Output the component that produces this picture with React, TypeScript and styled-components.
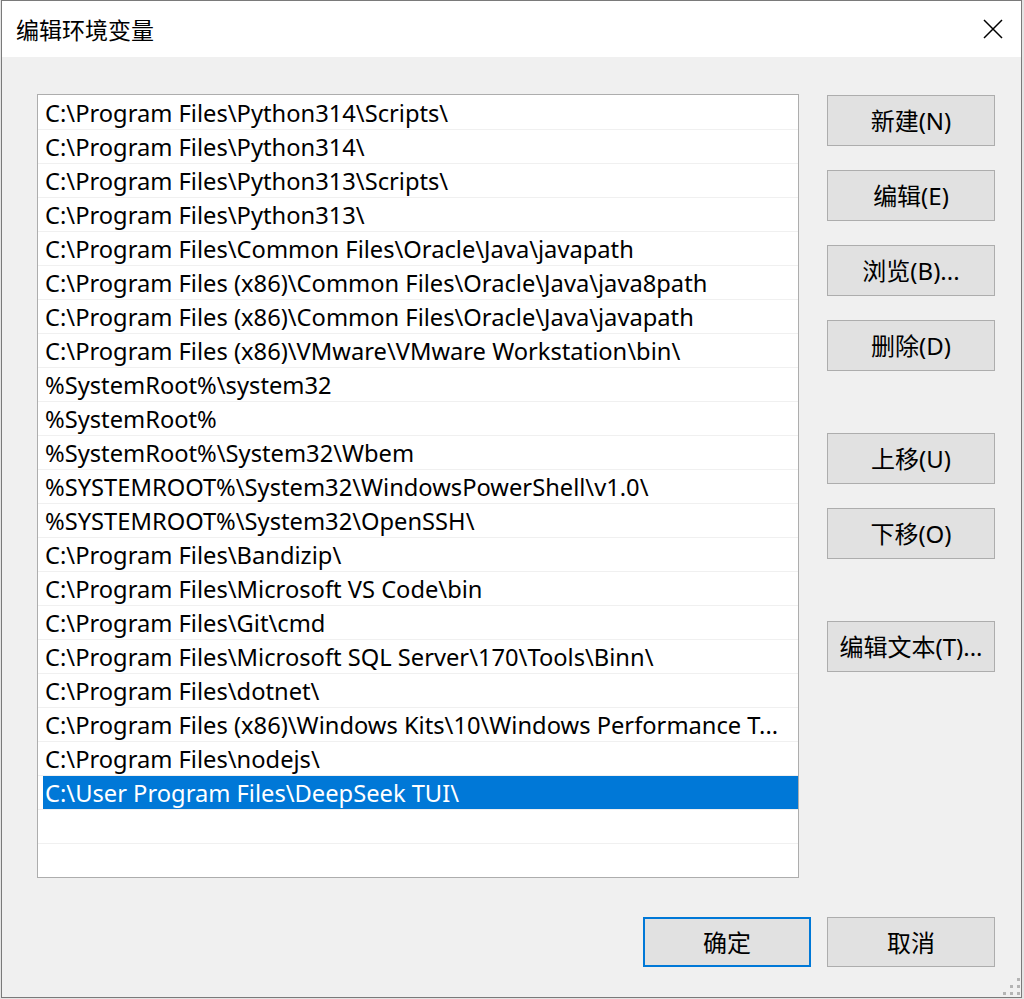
import styled, { createGlobalStyle } from "styled-components";

const paths = [
  "C:\\Program Files\\Python314\\Scripts\\",
  "C:\\Program Files\\Python314\\",
  "C:\\Program Files\\Python313\\Scripts\\",
  "C:\\Program Files\\Python313\\",
  "C:\\Program Files\\Common Files\\Oracle\\Java\\javapath",
  "C:\\Program Files (x86)\\Common Files\\Oracle\\Java\\java8path",
  "C:\\Program Files (x86)\\Common Files\\Oracle\\Java\\javapath",
  "C:\\Program Files (x86)\\VMware\\VMware Workstation\\bin\\",
  "%SystemRoot%\\system32",
  "%SystemRoot%",
  "%SystemRoot%\\System32\\Wbem",
  "%SYSTEMROOT%\\System32\\WindowsPowerShell\\v1.0\\",
  "%SYSTEMROOT%\\System32\\OpenSSH\\",
  "C:\\Program Files\\Bandizip\\",
  "C:\\Program Files\\Microsoft VS Code\\bin",
  "C:\\Program Files\\Git\\cmd",
  "C:\\Program Files\\Microsoft SQL Server\\170\\Tools\\Binn\\",
  "C:\\Program Files\\dotnet\\",
  "C:\\Program Files (x86)\\Windows Kits\\10\\Windows Performance T...",
  "C:\\Program Files\\nodejs\\",
  "C:\\User Program Files\\DeepSeek TUI\\",
  "",
  "",
];

const selectedIndex = 20;

const sideButtons = [
  { label: "新建(N)", spaced: false },
  { label: "编辑(E)", spaced: false },
  { label: "浏览(B)...", spaced: false },
  { label: "删除(D)", spaced: false },
  { label: "上移(U)", spaced: true },
  { label: "下移(O)", spaced: false },
  { label: "编辑文本(T)...", spaced: true },
];

// resize grip dots: [column, row]
const gripDots = [
  [3, 1],
  [2, 2],
  [3, 2],
  [1, 3],
  [2, 3],
  [3, 3],
];

export default function App() {
  return (
    <>
      <GlobalStyle />
      <Window>
        <TitleBar>
          <Title>编辑环境变量</Title>
          <CloseButton aria-label="关闭">
            <svg width="20" height="20" viewBox="0 0 20 20">
              <path d="M1 1 L19 19 M19 1 L1 19" stroke="#000" strokeWidth="1.5" fill="none" />
            </svg>
          </CloseButton>
        </TitleBar>
        <Body>
          <Main>
            <PathList>
              {paths.map((p, i) => (
                <PathRow key={i}>
                  <PathCell $selected={i === selectedIndex}>{p}</PathCell>
                </PathRow>
              ))}
            </PathList>
            <SideColumn>
              {sideButtons.map((b) => (
                <SideButton key={b.label} $spaced={b.spaced}>
                  {b.label}
                </SideButton>
              ))}
            </SideColumn>
          </Main>
          <Footer>
            <DialogButton $primary>确定</DialogButton>
            <DialogButton>取消</DialogButton>
          </Footer>
        </Body>
        <Grip>
          {gripDots.map(([c, r]) => (
            <GripDot key={`${c}-${r}`} $col={c} $row={r} />
          ))}
        </Grip>
      </Window>
    </>
  );
}

const GlobalStyle = createGlobalStyle`
  html, body {
    margin: 0;
    padding: 0;
    background: #e4e4e4;
  }
  body {
    width: 1024px;
    height: 999px;
    overflow: hidden;
    font-family: "Noto Sans", "Noto Sans CJK SC", sans-serif;
  }
  * {
    box-sizing: border-box;
  }
`;

const Window = styled.div`
  position: relative;
  width: 1021px;
  height: 998px;
  margin-left: 1px;
  border: 1px solid #7a7a7a;
  background: #f0f0f0;
  display: flex;
  flex-direction: column;
`;

const TitleBar = styled.div`
  height: 56px;
  flex-shrink: 0;
  background: #fff;
  display: flex;
  align-items: center;
  justify-content: space-between;
  padding: 0 18px 0 14px;
`;

const Title = styled.div`
  font-size: 23px;
  color: #000;
  font-family: "Noto Sans CJK SC", sans-serif;
`;

const CloseButton = styled.div`
  width: 20px;
  height: 20px;
  display: flex;
  svg {
    display: block;
  }
`;

const Body = styled.div`
  flex: 1;
  display: flex;
  flex-direction: column;
  padding: 37px 26px 30px 35px;
`;

const Main = styled.div`
  display: flex;
  gap: 28px;
`;

const PathList = styled.div`
  width: 762px;
  height: 784px;
  border: 1px solid #adadad;
  background: #fff;
  padding-top: 1px;
  overflow: hidden;
`;

const PathRow = styled.div`
  height: 34px;
  border-bottom: 1px solid #f0f0f0;
  padding-left: 5px;
  display: flex;
`;

const PathCell = styled.div<{ $selected?: boolean }>`
  flex: 1;
  padding-left: 2px;
  display: flex;
  align-items: center;
  font-size: 23.7px;
  white-space: nowrap;
  overflow: hidden;
  color: ${(p) => (p.$selected ? "#fff" : "#000")};
  background: ${(p) => (p.$selected ? "#0078d7" : "transparent")};
`;

const SideColumn = styled.div`
  width: 168px;
  display: flex;
  flex-direction: column;
  padding-top: 1px;
`;

const SideButton = styled.div<{ $spaced?: boolean }>`
  height: 51px;
  margin-bottom: 24px;
  margin-top: ${(p) => (p.$spaced ? "38px" : "0")};
  background: #e1e1e1;
  border: 1px solid #adadad;
  display: flex;
  align-items: center;
  justify-content: center;
  padding-bottom: 3px;
  font-size: 24px;
  color: #000;
`;

const Footer = styled.div`
  margin-top: 39px;
  display: flex;
  justify-content: flex-end;
  gap: 16px;
`;

const DialogButton = styled.div<{ $primary?: boolean }>`
  width: 168px;
  height: 50px;
  background: #e1e1e1;
  border: ${(p) => (p.$primary ? "2px solid #0078d7" : "1px solid #adadad")};
  display: flex;
  align-items: center;
  justify-content: center;
  padding-bottom: 2px;
  font-size: 24px;
  color: #000;
`;

const Grip = styled.div`
  position: absolute;
  right: 1px;
  bottom: 2px;
  display: grid;
  grid-template-columns: repeat(3, 3px);
  grid-template-rows: repeat(3, 3px);
  gap: 4px;
`;

const GripDot = styled.i<{ $col: number; $row: number }>`
  display: block;
  grid-column: ${(p) => p.$col};
  grid-row: ${(p) => p.$row};
  background: #b4b4b4;
`;
